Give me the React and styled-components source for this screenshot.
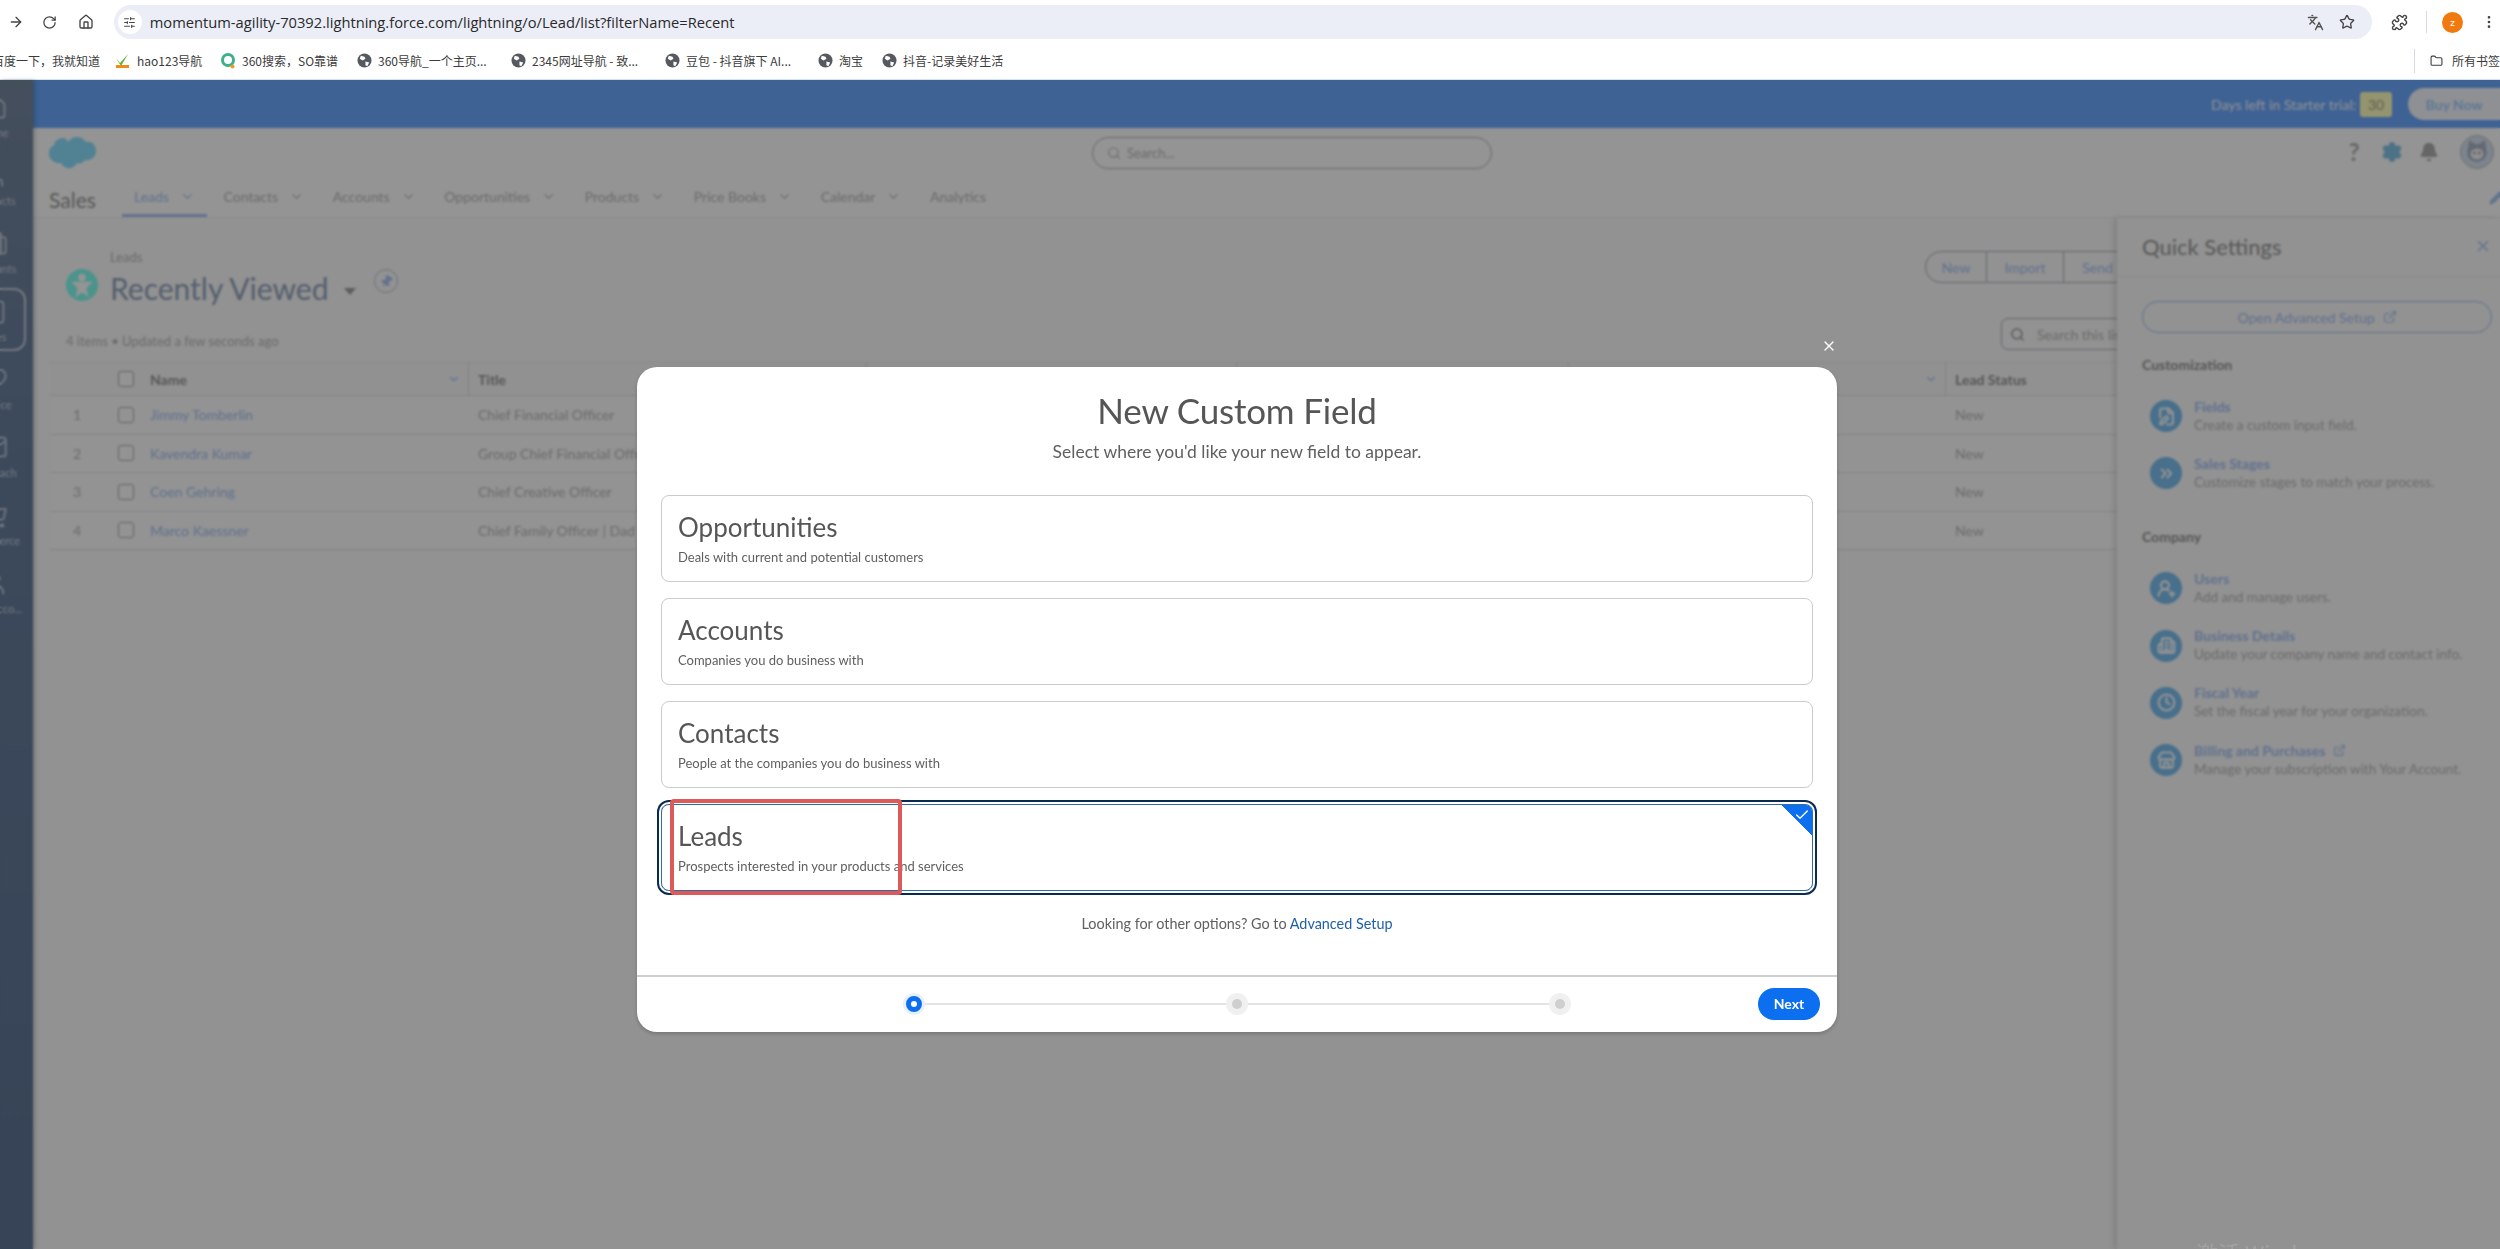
import React from 'react';
import styled, { createGlobalStyle } from 'styled-components';
import {
  ArrowRight, RotateCw, Home, SlidersHorizontal, Languages, Star, Puzzle, EllipsisVertical, Folder,
  User, Building2, ClipboardList, Heart, Mail, ShoppingCart, UserRound, ChevronDown, Search,
  Settings, Bell, Pencil, Pin, X, ExternalLink, Check, FileEdit, ChevronsRight, UserRoundPlus,
  Clock, Store,
} from 'lucide-react';

// -- CONSTANTS
const bookmarks = [
  { text: '百度一下，我就知道', kind: 'none', width: 117 },
  { text: 'hao123导航', kind: 'hao', width: 105 },
  { text: '360搜索，SO靠谱', kind: 'so', width: 137 },
  { text: '360导航_一个主页...', kind: 'globe', width: 154 },
  { text: '2345网址导航 - 致...', kind: 'globe', width: 154 },
  { text: '豆包 - 抖音旗下 AI...', kind: 'globe', width: 153 },
  { text: '淘宝', kind: 'globe', width: 64 },
  { text: '抖音-记录美好生活', kind: 'globe', width: 130 },
];

const sideItems = [
  { label: 'Home', icon: Home },
  { label: 'Contacts', icon: User },
  { label: 'Accounts', icon: Building2 },
  { label: 'Sales', icon: ClipboardList, active: true },
  { label: 'Service', icon: Heart },
  { label: 'Outreach', icon: Mail },
  { label: 'Commerce', icon: ShoppingCart },
  { label: 'Your Acco...', icon: UserRound },
];

const tabs = [
  { label: 'Leads', menu: true, active: true },
  { label: 'Contacts', menu: true },
  { label: 'Accounts', menu: true },
  { label: 'Opportunities', menu: true },
  { label: 'Products', menu: true },
  { label: 'Price Books', menu: true },
  { label: 'Calendar', menu: true },
  { label: 'Analytics' },
];

const leads = [
  { name: 'Jimmy Tomberlin', title: 'Chief Financial Officer' },
  { name: 'Kavendra Kumar', title: 'Group Chief Financial Officer' },
  { name: 'Coen Gehring', title: 'Chief Creative Officer' },
  { name: 'Marco Kaessner', title: 'Chief Family Officer | Dad' },
];

const customization = [
  { title: 'Fields', text: 'Create a custom input field.', icon: FileEdit },
  { title: 'Sales Stages', text: 'Customize stages to match your process.', icon: ChevronsRight },
];

const company = [
  { title: 'Users', text: 'Add and manage users.', icon: UserRoundPlus },
  { title: 'Business Details', text: 'Update your company name and contact info.', icon: Building2 },
  { title: 'Fiscal Year', text: 'Set the fiscal year for your organization.', icon: Clock },
  { title: 'Billing and Purchases', text: 'Manage your subscription with Your Account.', icon: Store, external: true },
];

const objects = [
  { title: 'Opportunities', text: 'Deals with current and potential customers' },
  { title: 'Accounts', text: 'Companies you do business with' },
  { title: 'Contacts', text: 'People at the companies you do business with' },
  { title: 'Leads', text: 'Prospects interested in your products and services', selected: true },
];

// colours under the dark overlay, they end up at 58%
const LINK = '#a9c6f6';
const BODY_TEXT = '#bcbcbc';
const HEAD_TEXT = '#989898';
const FONT = 'Lato, "Open Sans", "Noto Sans CJK SC", sans-serif';

// -- COMPONENTS
const PageStyle = createGlobalStyle`
  html, body {
    margin: 0;
    height: 100%;
    overflow: hidden;
    background: #fff;
  }

  body {
    font-family: ${FONT};
  }

  *, *::after {
    box-sizing: border-box;
  }
`;

const Page = styled.div`
  width: 2500px;
  height: 1249px;
  display: flex;
  flex-direction: column;
  overflow: hidden;
`;

// browser chrome
const Toolbar = styled.div`
  height: 44px;
  display: flex;
  align-items: center;
  color: #474747;
  background: #fff;
`;

const ToolButton = styled.span`
  width: ${(p) => p.$w || 36}px;
  display: flex;
  justify-content: center;
  color: #444;
`;

const AddressBar = styled.div`
  width: 2264px;
  height: 34px;
  margin-left: 10px;
  border-radius: 17px;
  background: #ebeef7;
  display: flex;
  align-items: center;
  gap: 15px;
  padding: 0 17px 0 4px;
`;

const SiteBadge = styled.span`
  width: 24px;
  height: 24px;
  border-radius: 50%;
  background: #fff;
  display: flex;
  align-items: center;
  justify-content: center;
  margin-right: -7px;
`;

const Url = styled.span`
  font-family: "Open Sans", sans-serif;
  font-size: 14.7px;
  color: #2a2a2a;
  flex: 1;
`;

const Profile = styled.span`
  width: 21px;
  height: 21px;
  border-radius: 50%;
  background: #f07a10;
  color: #fff;
  font-size: 10px;
  display: flex;
  align-items: center;
  justify-content: center;
`;

const ToolDivider = styled.span`
  width: 1px;
  height: 22px;
  background: #d5d9e0;
`;

const BookmarkBar = styled.div`
  height: 36px;
  padding-bottom: 2px;
  display: flex;
  align-items: center;
  background: #fff;
  border-bottom: 1px solid #d8e0ee;
  font-family: "Noto Sans CJK SC", "Open Sans", sans-serif;
  font-size: 12px;
  color: #3c3c3c;
  white-space: nowrap;
`;

const Bookmark = styled.span`
  display: flex;
  align-items: center;
  gap: 6px;
  flex: none;
  overflow: hidden;
  padding-left: ${(p) => (p.$plain ? 0 : 6)}px;
  margin-left: ${(p) => (p.$plain ? -8 : 0)}px;
`;

const AllBookmarks = styled.span`
  margin-left: auto;
  display: flex;
  align-items: center;
  gap: 9px;
  width: 86px;
  height: 24px;
  border-left: 1px solid #d5d9e0;
  padding-left: 15px;
  overflow: hidden;
`;

// app frame
const AppFrame = styled.div`
  flex: 1;
  display: flex;
  min-height: 0;
`;

const SideRail = styled.nav`
  width: 33px;
  flex: none;
  background: linear-gradient(180deg, #76889f 0%, #69809f 30%, #5f7596 100%);
  padding-top: 4px;
  overflow: hidden;
  box-shadow: 2px 0 4px rgba(0, 0, 0, 0.2);
  z-index: 1;
  display: flex;
  flex-direction: column;
  gap: 5px;
`;

const SideItem = styled.div`
  width: 64px;
  height: 63px;
  flex: none;
  margin-left: -38px;
  display: flex;
  flex-direction: column;
  align-items: center;
  justify-content: center;
  gap: 5px;
  color: #c4cddc;
  font-size: 11px;
  white-space: nowrap;
  border-radius: 12px;
  border: 2px solid ${(p) => (p.$active ? '#c6d0df' : 'transparent')};
`;

const Main = styled.div`
  flex: 1;
  min-width: 0;
  display: flex;
  flex-direction: column;
  background: #fff;
`;

const TrialBar = styled.div`
  height: 48px;
  flex: none;
  background: #6ca9ff;
  display: flex;
  align-items: center;
  justify-content: flex-end;
  color: #f2f7ff;
  font-size: 14px;
`;

const TrialCount = styled.span`
  width: 32px;
  height: 25px;
  margin-left: 4px;
  border-radius: 3px;
  background: #ffffc0;
  color: #a8a88c;
  display: flex;
  align-items: center;
  justify-content: center;
`;

const BuyNow = styled.span`
  width: 92px;
  height: 32px;
  margin-left: 16px;
  border-radius: 16px 0 0 16px;
  background: #f5f8ff;
  color: #a6d0ff;
  font-weight: 700;
  font-size: 14px;
  display: flex;
  align-items: center;
  justify-content: center;
`;

const Header = styled.header`
  height: 90px;
  flex: none;
  background: #fff;
  border-bottom: 1px solid #f0f0f0;
  padding: 9px 0 0 16px;
`;

const TopRow = styled.div`
  height: 31px;
  display: flex;
  align-items: center;
`;

const SearchPill = styled.div`
  width: 400px;
  height: 32px;
  margin-left: 996px;
  border: 1px solid #b4b4b4;
  border-radius: 16px;
  display: flex;
  align-items: center;
  gap: 6px;
  padding-left: 14px;
  font-size: 13px;
  color: ${BODY_TEXT};
`;

const HeaderIcons = styled.div`
  margin-left: auto;
  display: flex;
  align-items: center;
  gap: 16px;
  padding-right: 6px;
  margin-top: -2px;
`;

const HelpMark = styled.span`
  width: 22px;
  text-align: center;
  font-size: 24px;
  font-weight: 700;
  line-height: 24px;
  color: #b4b4b4;
`;

const Avatar = styled.span`
  width: 34px;
  height: 34px;
  border-radius: 50%;
  margin-left: 5px;
  background: #d7e3f2;
  border: 1px solid #c4c4c4;
  display: flex;
  align-items: center;
  justify-content: center;
`;

const NavRow = styled.div`
  height: 49px;
  display: flex;
  align-items: stretch;
`;

const AppName = styled.span`
  font-size: 21px;
  width: 73px;
  color: ${HEAD_TEXT};
  display: flex;
  align-items: center;
  padding-top: 13px;
`;

const Tab = styled.span`
  display: flex;
  align-items: center;
  gap: 11px;
  padding: 11px 12px 0;
  margin-right: 4.6px;
  font-size: 14px;
  color: ${(p) => (p.$active ? LINK : BODY_TEXT)};
  border-bottom: 3px solid ${(p) => (p.$active ? LINK : 'transparent')};
`;

const EditNav = styled.span`
  margin-left: auto;
  display: flex;
  align-items: center;
  padding-top: 11px;
  margin-right: -3px;
  color: ${LINK};
`;

// list view
const Workspace = styled.main`
  flex: 1;
  position: relative;
  padding-top: 31px;
  background: #fbfbfb;
  min-height: 0;
`;

const ListHeader = styled.div`
  height: 113px;
  display: flex;
  padding-left: 33px;
`;

const ListTitleCol = styled.div`
  display: flex;
  flex-direction: column;
`;

const Crumb = styled.span`
  font-size: 13px;
  line-height: 16px;
  padding-left: 44px;
  color: ${BODY_TEXT};
`;

const TitleRow = styled.div`
  display: flex;
  align-items: flex-start;
  margin-top: 4px;
`;

const ObjectIcon = styled.span`
  width: 32px;
  height: 32px;
  border-radius: 50%;
  background: #80fff0;
  display: flex;
  align-items: center;
  justify-content: center;
`;

const ListName = styled.h1`
  margin: 0 0 0 12px;
  font-size: 30px;
  line-height: 38px;
  font-weight: 400;
  color: #93a4be;
`;

const Caret = styled.span`
  width: 0;
  height: 0;
  margin: 19px 0 0 16px;
  border-left: 6px solid transparent;
  border-right: 6px solid transparent;
  border-top: 7px solid #a0a0a0;
`;

const PinButton = styled.span`
  width: 24px;
  height: 24px;
  margin-left: 18px;
  border-radius: 50%;
  border: 1px solid #b9c4d6;
  color: ${LINK};
  display: flex;
  align-items: center;
  justify-content: center;
  svg {
    transform: rotate(35deg);
  }
`;

const ListMeta = styled.span`
  margin-top: auto;
  padding-bottom: 13px;
  font-size: 13px;
  line-height: 16px;
  color: ${BODY_TEXT};
`;

const ListActions = styled.div`
  margin-left: auto;
  width: 575px;
  flex: none;
  padding-top: 2px;
  display: flex;
  flex-direction: column;
  gap: 35px;
`;

const ButtonGroup = styled.div`
  display: flex;
  height: 32px;
`;

const GroupButton = styled.span`
  width: ${(p) => p.$w}px;
  border: 1px solid #aab0bb;
  border-left-width: ${(p) => (p.$first ? 1 : 0)}px;
  border-radius: ${(p) => (p.$first ? '16px 0 0 16px' : 0)};
  color: ${LINK};
  font-size: 14px;
  display: flex;
  align-items: center;
  justify-content: center;
`;

const ListSearch = styled.div`
  width: 240px;
  height: 32px;
  margin-left: 76px;
  border: 1px solid #aab0bb;
  border-radius: 7px;
  display: flex;
  align-items: center;
  gap: 12px;
  padding-left: 8px;
  font-size: 14px;
  color: ${BODY_TEXT};
`;

const Table = styled.div`
  margin-left: 17px;
  border-top: 1px solid #ececec;
`;

const Row = styled.div`
  display: grid;
  grid-template-columns: 68px 32px 319px 398px 370px 332px 377px 1fr;
  height: ${(p) => (p.$head ? 33 : 38.5)}px;
  align-items: center;
  border-bottom: 1px solid #e2e2e2;
  background: ${(p) => (p.$head ? '#fafafa' : '#fdfdfd')};
  font-size: 14px;
  color: ${BODY_TEXT};
`;

const RowNumber = styled.span`
  text-align: center;
  padding-right: 14px;
`;

const CheckBox = styled.span`
  width: 16px;
  height: 16px;
  border: 1px solid #adadad;
  border-radius: 3px;
  background: #fdfdfd;
`;

const HeadCell = styled.span`
  height: 100%;
  display: flex;
  align-items: center;
  justify-content: space-between;
  padding: 0 7px 0 ${(p) => (p.$first ? 0 : 9)}px;
  border-right: 1px solid #dfdfdf;
  font-weight: 700;
  color: ${HEAD_TEXT};
  white-space: nowrap;
`;

const NameLink = styled.span`
  color: ${LINK};
`;

const Cell = styled.span`
  padding-left: 9px;
  white-space: nowrap;
  overflow: hidden;
`;

// quick settings panel, lies over the list
const QuickPanel = styled.aside`
  position: absolute;
  top: 0;
  right: 0;
  bottom: 0;
  width: 383px;
  background: #fbfbfb;
  box-shadow: -3px 0 6px rgba(0, 0, 0, 0.12);
`;

const PanelHead = styled.div`
  height: 59px;
  display: flex;
  align-items: center;
  justify-content: space-between;
  padding: 0 8px 2px 25px;
  border-bottom: 1px solid #f0f0f0;
  font-size: 22px;
  color: ${HEAD_TEXT};
  svg {
    color: ${LINK};
  }
`;

const PanelBody = styled.div`
  padding: 24px 8px 0 25px;
`;

const SetupButton = styled.div`
  height: 32px;
  border: 1px solid #a3c4f0;
  border-radius: 16px;
  display: flex;
  align-items: center;
  justify-content: center;
  gap: 8px;
  font-size: 14px;
  color: ${LINK};
`;

const SectionLabel = styled.h4`
  margin: ${(p) => p.$top}px 0 27px;
  font-size: 14px;
  line-height: 16px;
  font-weight: 700;
  color: ${HEAD_TEXT};
`;

const SettingList = styled.div`
  display: flex;
  flex-direction: column;
  gap: 25.3px;
  padding-left: 8px;
`;

const Setting = styled.div`
  display: flex;
  align-items: center;
  gap: 12px;
  height: 32px;
`;

const SettingIcon = styled.span`
  width: 32px;
  height: 32px;
  border-radius: 50%;
  flex: none;
  background: #7cc0f0;
  color: #fff;
  display: flex;
  align-items: center;
  justify-content: center;
`;

const SettingTitle = styled.div`
  font-size: 14px;
  line-height: 18px;
  font-weight: 700;
  color: ${LINK};
  display: flex;
  align-items: center;
  gap: 8px;
`;

const SettingText = styled.div`
  font-size: 13.5px;
  line-height: 19px;
  color: ${BODY_TEXT};
  white-space: nowrap;
`;

// dark overlay and dialog
const Overlay = styled.div`
  position: fixed;
  top: 80px;
  left: 0;
  right: 0;
  bottom: 0;
  z-index: 5;
  background: rgba(0, 0, 0, 0.42);
  backdrop-filter: blur(0.9px);
  padding: 287px 0 0 637px;
`;

const Modal = styled.section`
  width: 1200px;
  height: 665px;
  position: relative;
  background: #fff;
  border-radius: 20px;
  display: flex;
  flex-direction: column;
  box-shadow: 0 2px 4px rgba(0, 0, 0, 0.2);
`;

const CloseButton = styled.span`
  position: absolute;
  top: -29px;
  right: 0;
  color: #fff;
  display: flex;
`;

const ModalBody = styled.div`
  flex: 1;
  padding: 21px 24px 0;
  text-align: center;
`;

const ModalTitle = styled.h2`
  margin: 0;
  font-size: 35px;
  line-height: 44px;
  font-weight: 400;
  letter-spacing: -0.2px;
  color: #565656;
`;

const ModalSub = styled.p`
  margin: 8px 0 31px;
  font-size: 17.5px;
  line-height: 24px;
  color: #606060;
`;

const Cards = styled.div`
  display: flex;
  flex-direction: column;
  gap: 16px;
`;

const Card = styled.div`
  position: relative;
  height: 87px;
  text-align: left;
  padding: 15px 16px 0;
  border-radius: 8px;
  border: 1px solid ${(p) => (p.$selected ? '#2e6da4' : '#cbcbcb')};
  box-shadow: ${(p) => (p.$selected ? '0 0 0 2px #fff, 0 0 0 4px #0a2a52' : 'none')};
`;

const CardTitle = styled.div`
  font-size: 26px;
  line-height: 32px;
  color: #565656;
`;

const CardText = styled.div`
  margin-top: 5px;
  font-size: 13px;
  line-height: 18px;
  color: #606060;
`;

const Corner = styled.span`
  position: absolute;
  top: 0;
  right: 0;
  width: 30px;
  height: 30px;
  background: linear-gradient(45deg, transparent 50%, #0b6ff0 50%);
  border-top-right-radius: 6px;
  color: #fff;
  display: flex;
  justify-content: flex-end;
  svg {
    margin: 2px 2px 0 0;
  }
`;

const Callout = styled.span`
  position: absolute;
  top: -6px;
  left: 8px;
  width: 232px;
  height: 96px;
  border: 4px solid #dc5a5a;
  border-radius: 4px;
  pointer-events: none;
`;

const OtherOptions = styled.p`
  margin: 24px 0 0;
  font-size: 14.4px;
  line-height: 18px;
  color: #606060;
`;

const TextLink = styled.span`
  color: #1f5fa8;
`;

const ModalFoot = styled.div`
  height: 57px;
  flex: none;
  border-top: 2px solid #cfcfcf;
  display: flex;
  align-items: center;
  padding: 0 17px 2px 266px;
`;

const Stepper = styled.div`
  width: 668px;
  display: flex;
  align-items: center;
`;

const StepDot = styled.span`
  width: 22px;
  height: 22px;
  flex: none;
  border-radius: 50%;
  background: ${(p) => (p.$current ? '#e8f0fb' : '#f0f0f0')};
  display: flex;
  align-items: center;
  justify-content: center;
  &::after {
    content: '';
    width: ${(p) => (p.$current ? 16 : 10)}px;
    height: ${(p) => (p.$current ? 16 : 10)}px;
    border-radius: 50%;
    background: ${(p) => (p.$current ? '#fff' : '#cfcfcf')};
    border: ${(p) => (p.$current ? '5px solid #0b6ff0' : 'none')};
  }
`;

const StepLine = styled.span`
  flex: 1;
  height: 2px;
  background: #e4e4e4;
`;

const NextButton = styled.span`
  width: 62px;
  height: 32px;
  margin-left: auto;
  border-radius: 16px;
  background: #0b6ff0;
  color: #fff;
  font-size: 14px;
  font-weight: 700;
  display: flex;
  align-items: center;
  justify-content: center;
`;

const Watermark = styled.span`
  position: absolute;
  left: 2196px;
  bottom: -19px;
  font-family: "Noto Sans CJK SC", sans-serif;
  font-size: 22px;
  color: #a2a2a2;
`;

// -- SMALL DRAWINGS
const CloudLogo = () => (
  <svg width="47" height="32" viewBox="0 0 47 32">
    <path
      d="M19 5c2-3 5-5 9-5 4 0 7 2 9 5 7-1 10 4 10 9s-4 10-11 9c-2 3-5 4-8 3-2 4-6 6-10 5-3-1-5-3-6-5-6 1-11-3-12-8-1-4 1-8 5-10 1-5 5-7 9-7 2 0 4 1 5 4z"
      fill="#8ce0ff"
    />
  </svg>
);

const CatFace = () => (
  <svg width="28" height="28" viewBox="0 0 28 28">
    <path d="M5 10L6 2l6 4h4l6-4 1 8c2 6 0 13-9 14C5 23 3 16 5 10z" fill="#a9b6c8" />
    <ellipse cx="14" cy="16" rx="6.5" ry="5.5" fill="#f4f4f4" />
    <circle cx="11.5" cy="15" r="1" fill="#667" />
    <circle cx="16.5" cy="15" r="1" fill="#667" />
  </svg>
);

const BookmarkIcon = ({ kind }) => {
  if (kind === 'none') return null;
  if (kind === 'hao') {
    return (
      <svg width="16" height="16" viewBox="0 0 16 16">
        <path d="M1 5l4 5 8-9-7 12z" fill="#5fb32e" />
        <rect x="1" y="12" width="13" height="3" fill="#f08a1d" />
      </svg>
    );
  }
  if (kind === 'so') {
    return (
      <svg width="16" height="16" viewBox="0 0 16 16">
        <circle cx="8" cy="7" r="5.5" fill="none" stroke="#3db28a" strokeWidth="3" />
        <circle cx="12.5" cy="13.5" r="2" fill="#f39b1e" />
      </svg>
    );
  }
  return (
    <svg width="15" height="15" viewBox="0 0 16 16">
      <circle cx="8" cy="8" r="7.5" fill="#565a60" />
      <path d="M4 3l4 1 1 2-3 2-3-2zM9 9l4 1-2 4-2-1z" fill="#fff" />
    </svg>
  );
};

const LeadGlyph = () => (
  <svg width="24" height="26" viewBox="0 0 22 24" fill="#fff">
    <circle cx="11" cy="5" r="3.5" />
    <path d="M1 9h20l-6 6 2 8-6-4-6 4 2-8z" />
  </svg>
);

const SettingRow = ({ title, text, icon: Icon, external }) => (
  <Setting>
    <SettingIcon>
      <Icon size={19} strokeWidth={2.6} />
    </SettingIcon>
    <div>
      <SettingTitle>
        {title}
        {external && <ExternalLink size={13} />}
      </SettingTitle>
      <SettingText>{text}</SettingText>
    </div>
  </Setting>
);

// -- MAIN
export default function App() {
  return (
    <Page>
      <PageStyle />
      <Toolbar>
        <ToolButton $w={32}><ArrowRight size={16} /></ToolButton>
        <ToolButton><RotateCw size={15} /></ToolButton>
        <ToolButton><Home size={16} /></ToolButton>
        <AddressBar>
          <SiteBadge><SlidersHorizontal size={13} /></SiteBadge>
          <Url>momentum-agility-70392.lightning.force.com/lightning/o/Lead/list?filterName=Recent</Url>
          <Languages size={17} color="#555" />
          <Star size={16} color="#444" />
        </AddressBar>
        <ToolButton $w={54}><Puzzle size={17} /></ToolButton>
        <ToolDivider />
        <ToolButton $w={51}><Profile>z</Profile></ToolButton>
        <ToolButton $w={22}><EllipsisVertical size={16} /></ToolButton>
      </Toolbar>
      <BookmarkBar>
        {bookmarks.map(({ text, kind, width }) => (
          <Bookmark key={text} $plain={kind === 'none'} style={{ width }}>
            <BookmarkIcon kind={kind} />
            {text}
          </Bookmark>
        ))}
        <AllBookmarks>
          <Folder size={16} />
          所有书签
        </AllBookmarks>
      </BookmarkBar>
      <AppFrame>
        <SideRail>
          {sideItems.map(({ label, icon: Icon, active }) => (
            <SideItem key={label} $active={active}>
              <Icon size={28} strokeWidth={1.5} />
              {label}
            </SideItem>
          ))}
        </SideRail>
        <Main>
          <TrialBar>
            Days left in Starter trial:
            <TrialCount>30</TrialCount>
            <BuyNow>Buy Now</BuyNow>
          </TrialBar>
          <Header>
            <TopRow>
              <CloudLogo />
              <SearchPill>
                <Search size={14} />
                Search...
              </SearchPill>
              <HeaderIcons>
                <HelpMark>?</HelpMark>
                <Settings size={22} color="#86c5e8" fill="#86c5e8" />
                <Bell size={20} color="#b0b0b0" fill="#b0b0b0" />
                <Avatar><CatFace /></Avatar>
              </HeaderIcons>
            </TopRow>
            <NavRow>
              <AppName>Sales</AppName>
              {tabs.map(({ label, menu, active }) => (
                <Tab key={label} $active={active}>
                  {label}
                  {menu && <ChevronDown size={15} />}
                </Tab>
              ))}
              <EditNav><Pencil size={14} fill={LINK} /></EditNav>
            </NavRow>
          </Header>
          <Workspace>
            <ListHeader>
              <ListTitleCol>
                <Crumb>Leads</Crumb>
                <TitleRow>
                  <ObjectIcon><LeadGlyph /></ObjectIcon>
                  <ListName>Recently Viewed</ListName>
                  <Caret />
                  <PinButton><Pin size={13} fill={LINK} /></PinButton>
                </TitleRow>
                <ListMeta>4 items • Updated a few seconds ago</ListMeta>
              </ListTitleCol>
              <ListActions>
                <ButtonGroup>
                  <GroupButton $first $w={62}>New</GroupButton>
                  <GroupButton $w={77}>Import</GroupButton>
                  <GroupButton $w={130}>Send List Email</GroupButton>
                </ButtonGroup>
                <ListSearch>
                  <Search size={15} color="#8a8a8a" />
                  Search this list...
                </ListSearch>
              </ListActions>
            </ListHeader>
            <Table>
              <Row $head>
                <span />
                <CheckBox />
                <HeadCell $first>Name <ChevronDown size={14} color={LINK} /></HeadCell>
                <HeadCell>Title <ChevronDown size={14} color={LINK} /></HeadCell>
                <HeadCell>Company <ChevronDown size={14} color={LINK} /></HeadCell>
                <HeadCell>Phone <ChevronDown size={14} color={LINK} /></HeadCell>
                <HeadCell>Email <ChevronDown size={14} color={LINK} /></HeadCell>
                <HeadCell>Lead Status <ChevronDown size={14} color={LINK} /></HeadCell>
              </Row>
              {leads.map(({ name, title }, ind) => (
                <Row key={name}>
                  <RowNumber>{ind + 1}</RowNumber>
                  <CheckBox />
                  <NameLink>{name}</NameLink>
                  <Cell>{title}</Cell>
                  <span />
                  <span />
                  <span />
                  <Cell>New</Cell>
                </Row>
              ))}
            </Table>
            <QuickPanel>
              <PanelHead>
                Quick Settings
                <X size={18} />
              </PanelHead>
              <PanelBody>
                <SetupButton>
                  Open Advanced Setup
                  <ExternalLink size={14} />
                </SetupButton>
                <SectionLabel $top={24}>Customization</SectionLabel>
                <SettingList>
                  {customization.map((item) => <SettingRow key={item.title} {...item} />)}
                </SettingList>
                <SectionLabel $top={40}>Company</SectionLabel>
                <SettingList>
                  {company.map((item) => <SettingRow key={item.title} {...item} />)}
                </SettingList>
              </PanelBody>
            </QuickPanel>
          </Workspace>
        </Main>
      </AppFrame>
      <Overlay>
        <Modal>
          <CloseButton><X size={16} /></CloseButton>
          <ModalBody>
            <ModalTitle>New Custom Field</ModalTitle>
            <ModalSub>Select where you'd like your new field to appear.</ModalSub>
            <Cards>
              {objects.map(({ title, text, selected }) => (
                <Card key={title} $selected={selected}>
                  <CardTitle>{title}</CardTitle>
                  <CardText>{text}</CardText>
                  {selected && <Corner><Check size={16} /></Corner>}
                  {selected && <Callout />}
                </Card>
              ))}
            </Cards>
            <OtherOptions>
              Looking for other options? Go to <TextLink>Advanced Setup</TextLink>
            </OtherOptions>
          </ModalBody>
          <ModalFoot>
            <Stepper>
              <StepDot $current />
              <StepLine />
              <StepDot />
              <StepLine />
              <StepDot />
            </Stepper>
            <NextButton>Next</NextButton>
          </ModalFoot>
        </Modal>
        <Watermark>激活 Windows</Watermark>
      </Overlay>
    </Page>
  );
}
